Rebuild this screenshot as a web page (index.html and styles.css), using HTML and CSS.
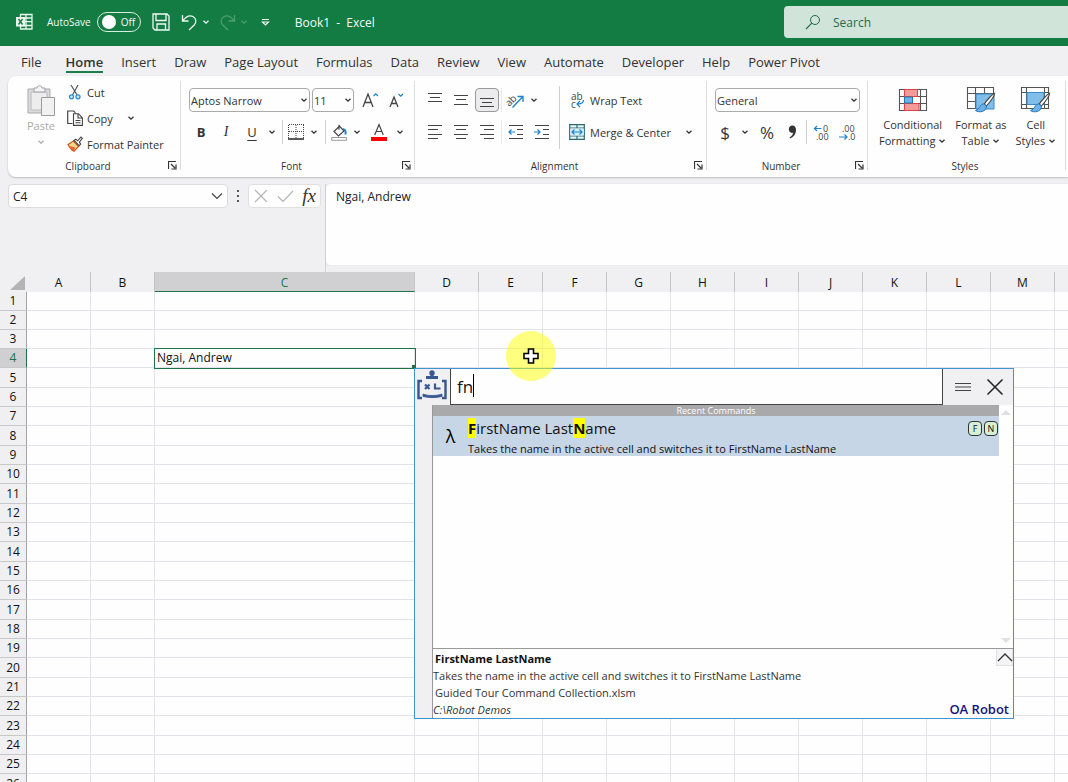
FILE: index.html
```html
<!DOCTYPE html>
<html lang="en">
<head>
<meta charset="utf-8">
<title>Book1 - Excel</title>
<link rel="stylesheet" href="styles.css">
</head>
<body>
<svg class="defs" aria-hidden="true">
  <symbol id="chev" viewBox="0 0 8 8"><path d="M1.500 2.700 4 5.200 6.500 2.700" fill="none" stroke="currentColor" stroke-width="1.300"/></symbol>
  <symbol id="launch" viewBox="0 0 9 9"><path d="M.5 8V.5H8M3 3l4 4M8 3.500V8H3.500" fill="none" stroke="#333" stroke-width="1.200"/></symbol>
  <symbol id="brush" viewBox="0 0 22 22"><path d="M20.600 1.200c-2 .8-8 7-10.400 11l2.200 1.800C15.500 10.500 20.500 4.500 20.600 1.200Z" fill="#fff" stroke="#444" stroke-width="1.100"/><path d="M9.800 12c-3.800-.4-3.600 5-8.300 6.600 3.500 2.200 10.800 1.600 11-4.600Z" fill="#6fb1e4" stroke="#2077b8"/></symbol>
</svg>

<header class="titlebar">
  <svg class="app-icon" width="17" height="18" viewBox="0 0 17 18"><path d="M4.500 1.500h11.500v14.500H4.500zM10 1.500V16M4.500 5H16M4.500 8.700H16M4.500 12.500H16" fill="none" stroke="#e8f5ec" stroke-width="1.300"/><path d="M0 4h9v9.500H0z" fill="#e8f5ec"/><path d="m2.500 6 4 5.500m0-5.500-4 5.500" stroke="#137c43" stroke-width="1.400"/></svg>
  <label class="autosave"><span>AutoSave</span><input type="checkbox" class="switch-input"><span class="switch"><i></i>Off</span></label>
  <button class="tb save" aria-label="Save"><svg width="18" height="18" viewBox="0 0 18 18"><path d="M1 1h14l2 2v14H3l-2-2ZM4 1v6.500h10V1M5 17v-6h8.500v6" fill="none" stroke="currentColor" stroke-width="1.300"/></svg></button>
  <button class="tb undo" aria-label="Undo"><svg width="17" height="17" viewBox="0 0 17 17"><path d="M1.500 1v6h6M1.800 6.700C5 2.500 8.500.8 12 2.500c3.500 2 3.500 6 1.200 8.500L8 16" fill="none" stroke="currentColor" stroke-width="1.300"/></svg><svg width="8" height="8"><use href="#chev"/></svg></button>
  <button class="tb redo" aria-label="Redo" disabled><svg width="17" height="17" viewBox="0 0 17 17"><path d="M15.500 1v6h-6M15.200 6.700C12 2.500 8.500.8 5 2.500 1.500 4.500 1.500 8.500 3.800 11L9 16" fill="none" stroke="currentColor" stroke-width="1.300"/></svg><svg width="8" height="8"><use href="#chev"/></svg></button>
  <button class="tb more" aria-label="Customize toolbar"><svg width="9" height="9" viewBox="0 0 9 9"><path d="M1 1.500h7M1.500 4 4.500 7l3-3Z" fill="none" stroke="currentColor" stroke-width="1.200"/></svg></button>
  <span class="doc-title">Book1&nbsp; -&nbsp; Excel</span>
  <label class="search"><svg width="16" height="16" viewBox="0 0 16 16"><circle cx="10" cy="6" r="4.500" fill="none" stroke="#1c6b4c"/><path d="M6.800 9.200 1 15" stroke="#1c6b4c" stroke-width="1.100"/></svg><input type="text" placeholder="Search" aria-label="Search"></label>
</header>

<nav class="tabs">
  <a href="#file" class="file">File</a><a href="#home" class="active">Home</a><a href="#insert">Insert</a><a href="#draw">Draw</a><a href="#layout">Page Layout</a><a href="#formulas">Formulas</a><a href="#data">Data</a><a href="#review">Review</a><a href="#view">View</a><a href="#automate">Automate</a><a href="#developer">Developer</a><a href="#help">Help</a><a href="#pivot">Power Pivot</a>
</nav>

<section class="ribbon">
  <div class="group clipboard">
    <div class="body">
      <button class="paste" disabled><svg width="28" height="31" viewBox="0 0 28 31"><path d="M1 4h22v24H1z" fill="#dcdcde" stroke="#a9a9ab"/><path d="M4 7h16v18H4z" fill="#ededee" stroke="#b8b8ba"/><path d="M7 7V3h3c0-3 5-3 5 0h3v4Z" fill="#f4f4f4" stroke="#a0a0a2"/><path d="M14.500 12.500h13v18h-13z" fill="#f1f1f2" stroke="#9c9c9e"/></svg><span>Paste</span><svg width="8" height="8"><use href="#chev"/></svg></button>
      <div class="stack">
        <button><svg width="16" height="16" viewBox="0 0 16 16"><path d="m4 1 6 10M11 1 5.500 11" stroke="#555" stroke-width="1.200"/><circle cx="4.500" cy="12.800" r="2" fill="#d8eefb" stroke="#2a8dd4" stroke-width="1.300"/><circle cx="11" cy="12.800" r="2" fill="#d8eefb" stroke="#2a8dd4" stroke-width="1.300"/></svg><span>Cut</span></button>
        <button><svg width="16" height="16" viewBox="0 0 16 16"><path d="M5.500 13.500H.7V1h6l1.800 1.800" fill="none" stroke="#444" stroke-width="1.200"/><path d="M6.500 3.700h5L15.400 8v7.400H6.500zM11 4v4h4M8.500 10.500h5M8.500 12.800h5" fill="#fff" stroke="#444" stroke-width="1.100"/></svg><span>Copy</span><svg class="far" width="8" height="8"><use href="#chev"/></svg></button>
        <button><svg width="16" height="16" viewBox="0 0 16 16"><path d="M1 8.500 6.500 5l5 5.500L7 15.300C4.500 14 2.500 11.500 1 8.500Z" fill="#fbd98c" stroke="#c8571c" stroke-width="1.200"/><path d="m2.500 10 6 1.500L7 15C5 13.500 3.500 12 2.500 10Z" fill="#e8673a"/><path d="m7 4.500 1.800-1.300 1.800 1.600L14 1l1.300 1.300-3 3.900 1.400 1.800-1.500 1.700Z" fill="#fff" stroke="#444" stroke-width="1.100"/></svg><span>Format Painter</span></button>
      </div>
    </div>
    <div class="foot"><span>Clipboard</span><button aria-label="Clipboard settings"><svg width="9" height="9"><use href="#launch"/></svg></button></div>
  </div>

  <div class="group font">
    <div class="body col">
      <div class="row">
        <label class="sel name"><select aria-label="Font"><option>Aptos Narrow</option></select><svg width="8" height="8"><use href="#chev"/></svg></label>
        <label class="sel size"><select aria-label="Font size"><option>11</option></select><svg width="8" height="8"><use href="#chev"/></svg></label>
        <button class="w26" aria-label="Increase font size"><svg width="17" height="17" viewBox="0 0 17 17"><path d="m1 15 5-13 5 13M3 10.500h6" fill="none" stroke="#444" stroke-width="1.300"/><path d="m11.500 4 2.200-2.200L16 4" fill="none" stroke="#1d83c8" stroke-width="1.200"/></svg></button>
        <button class="w26" aria-label="Decrease font size"><svg width="17" height="17" viewBox="0 0 17 17"><path d="m2 15 4-10 4 10M3.500 11.500h5" fill="none" stroke="#444" stroke-width="1.300"/><path d="m10.500 2 2.200 2.200L15 2" fill="none" stroke="#1d83c8" stroke-width="1.200"/></svg></button>
      </div>
      <div class="row">
        <button class="w24 bold">B</button><button class="w26 ital">I</button><button class="w26 under">U</button>
        <button class="w14" aria-label="Underline options"><svg width="8" height="8"><use href="#chev"/></svg></button><i class="sep"></i>
        <button class="w20" aria-label="Borders"><svg width="16" height="16" viewBox="0 0 16 16"><path d="M1 .5h15M.5 1v13M15.500 1v13M8 1v13M1 7.500h15" fill="none" stroke="#444" stroke-dasharray="1 1"/><path d="M0 15h16" stroke="#222" stroke-width="1.500"/></svg></button>
        <button class="w16" aria-label="Border options"><svg width="8" height="8"><use href="#chev"/></svg></button><i class="sep"></i>
        <button class="w20" aria-label="Fill colour"><svg width="17" height="17" viewBox="0 0 17 17"><path d="m3 7.500 5.500-5.500 4.500 5-5.500 5ZM8 .8v5" fill="none" stroke="#444" stroke-width="1.200"/><path d="M12 5c2.500.5 3.200 3 2.300 5.500" fill="none" stroke="#1d83c8" stroke-width="2"/><path d="M.7 13.500h15v2.800H.7z" fill="#fff" stroke="#999"/></svg></button>
        <button class="w16" aria-label="Fill options"><svg width="8" height="8"><use href="#chev"/></svg></button>
        <button class="w28" aria-label="Font colour"><svg width="16" height="17" viewBox="0 0 16 17"><path d="m3.700 11 4.300-10.500L12.300 11M5.200 7.500h5.600" fill="none" stroke="#444" stroke-width="1.200"/><path d="M0 13h16v4H0z" fill="#f00"/></svg></button>
        <button class="w14" aria-label="Font colour options"><svg width="8" height="8"><use href="#chev"/></svg></button>
      </div>
    </div>
    <div class="foot"><span>Font</span><button aria-label="Font settings"><svg width="9" height="9"><use href="#launch"/></svg></button></div>
  </div>

  <div class="group align">
    <div class="body">
      <div class="col">
        <div class="row">
          <button class="w26" aria-label="Top align"><svg class="ln" width="16" height="16" viewBox="0 0 16 16"><path d="M1 1.500h14M3 5.500h10M1 9.500h14"/></svg></button>
          <button class="w26" aria-label="Middle align"><svg class="ln" width="16" height="16" viewBox="0 0 16 16"><path d="M1 3.500h14M3 7.500h10M1 12.500h14"/></svg></button>
          <button class="w26 pressed" aria-label="Bottom align" aria-pressed="true"><svg class="ln" width="16" height="16" viewBox="0 0 16 16"><path d="M1 6.500h14M3 10.500h10M1 14.500h14"/></svg></button>
          <i class="sep light"></i>
          <button class="w24" aria-label="Orientation"><svg width="17" height="17" viewBox="0 0 17 17"><text x="-2" y="11" transform="rotate(-45 5 8)" font-size="10" fill="#444">ab</text><path d="M5.500 15.500 15.500 5M10.500 4.500H16V10" fill="none" stroke="#1d83c8" stroke-width="1.300"/></svg></button>
          <button class="w14" aria-label="Orientation options"><svg width="8" height="8"><use href="#chev"/></svg></button>
        </div>
        <div class="row">
          <button class="w26" aria-label="Align left"><svg class="ln" width="16" height="16" viewBox="0 0 16 16"><path d="M1 1.500h14M1 5.500h10M1 10.500h14M1 14.500h10"/></svg></button>
          <button class="w26" aria-label="Center"><svg class="ln" width="16" height="16" viewBox="0 0 16 16"><path d="M1 1.500h14M3 5.500h10M1 10.500h14M3 14.500h10"/></svg></button>
          <button class="w26" aria-label="Align right"><svg class="ln" width="16" height="16" viewBox="0 0 16 16"><path d="M1 1.500h14M5 5.500h10M1 10.500h14M5 14.500h10"/></svg></button>
          <i class="sep light"></i>
          <button class="w26" aria-label="Decrease indent"><svg class="ln" width="16" height="16" viewBox="0 0 16 16"><path d="M1 1.500h14M9 5.500h6M9 10.500h6M1 14.500h14"/><path class="blue" d="M7 8H1M3.500 5.500 1 8l2.500 2.500"/></svg></button>
          <button class="w26" aria-label="Increase indent"><svg class="ln" width="16" height="16" viewBox="0 0 16 16"><path d="M1 1.500h14M9 5.500h6M9 10.500h6M1 14.500h14"/><path class="blue" d="M0 8h6M3.500 5.500 6 8l-2.500 2.500"/></svg></button>
        </div>
      </div>
      <div class="col wraps">
        <div class="row"><button><svg width="16" height="17" viewBox="0 0 16 17"><text x="2" y="8" font-size="10" fill="#444">ab</text><text x="2" y="16" font-size="10" fill="#444">c</text><path d="M14.500 8c0 3-1.500 4-6 4M11 9l-3 3 3 3" fill="none" stroke="#1d83c8" stroke-width="1.200"/></svg><span>Wrap Text</span></button></div>
        <div class="row"><button><svg width="16" height="16" viewBox="0 0 16 16"><path d="M.7.7h14.600v14.600H.7zM.7 4h14.600M.7 12h14.600M8 .7V4M8 12v3.300" fill="#eef7f4" stroke="#2a6a72" stroke-width="1.200"/><path d="M1.300 4.500h13.400v7H1.300z" fill="#d5eefb"/><path d="M3 8h10M5.500 5.500 3 8l2.500 2.500M10.500 5.500 13 8l-2.500 2.500" fill="none" stroke="#1d83c8" stroke-width="1.200"/></svg><span>Merge &amp; Center</span><svg class="far" width="8" height="8"><use href="#chev"/></svg></button></div>
      </div>
    </div>
    <div class="foot"><span>Alignment</span><button aria-label="Alignment settings"><svg width="9" height="9"><use href="#launch"/></svg></button></div>
  </div>

  <div class="group number">
    <div class="body col">
      <div class="row"><label class="sel wide"><select aria-label="Number format"><option>General</option></select><svg width="8" height="8"><use href="#chev"/></svg></label></div>
      <div class="row">
        <button class="w20 big" aria-label="Currency">$</button><button class="w20" aria-label="Currency options"><svg width="8" height="8"><use href="#chev"/></svg></button><button class="w24 big" aria-label="Percent">%</button><button class="w26" aria-label="Comma style"><svg width="9" height="14" viewBox="0 0 9 14"><path d="M4.300.5C7 .5 8.300 2.500 8 5.500 7.700 9.500 5.500 12 2 13.500l-.4-1C4 11 5 9.500 5 7.800 2.500 8.500.8 6.500.8 4.300.8 2 2.300.5 4.300.5Z" fill="#333"/></svg></button><i class="sep tight"></i>
        <button class="w26" aria-label="Increase decimal"><svg width="17" height="17" viewBox="0 0 17 17"><text x="10" y="8" font-size="9" fill="#444">0</text><text x="3" y="16" font-size="9" fill="#444">.00</text><path d="M8.500 4.500H1.500M4 2 1.500 4.500 4 7" fill="none" stroke="#1d83c8" stroke-width="1.200"/></svg></button>
        <button class="w26" aria-label="Decrease decimal"><svg width="17" height="17" viewBox="0 0 17 17"><text x="3" y="8" font-size="9" fill="#444">.00</text><text x="9" y="16" font-size="9" fill="#444">.0</text><path d="M0 13h8M5.500 10.500 8 13l-2.500 2.500" fill="none" stroke="#1d83c8" stroke-width="1.200"/></svg></button>
      </div>
    </div>
    <div class="foot"><span>Number</span><button aria-label="Number settings"><svg width="9" height="9"><use href="#launch"/></svg></button></div>
  </div>

  <div class="group styles">
    <div class="body">
      <button class="tall"><svg width="30" height="26" viewBox="0 0 30 26"><path d="M1.500 2.500h27v21h-27zM1.500 9.500h27M1.500 16.500h27M6.500 2.500v21M22.500 2.500v21" fill="#fff" stroke="#555" stroke-width="1.100"/><path d="M6.500 2.500h13v7h-13zM6.500 16.500h14.500v7H6.500z" fill="#f59a9a" stroke="#e0433f"/><path d="M6.500 10h8v6h-8z" fill="#6fb1e4" stroke="#2077b8"/></svg><span>Conditional<br>Formatting <svg width="8" height="8"><use href="#chev"/></svg></span></button>
      <button class="tall"><svg width="30" height="28" viewBox="0 0 30 28"><path d="M1.500 1.500h26v21h-26zM1.500 7.500h26M1.500 15.500h26M9.500 1.500v21M18.500 1.500v21" fill="#fff" stroke="#555" stroke-width="1.100"/><path d="M10 8h18v15H10z" fill="#80bde9" stroke="#3b8ac6"/><use href="#brush" x="8" y="6" width="22" height="22"/></svg><span>Format as<br>Table <svg width="8" height="8"><use href="#chev"/></svg></span></button>
      <button class="tall"><svg width="30" height="28" viewBox="0 0 30 28"><path d="M.5 1.500h27v21H.5zM.5 6.500h27M.5 18.500h27M5.500 1.500v21M23.500 1.500v21" fill="#fff" stroke="#555" stroke-width="1.100"/><path d="M6 6.500h17v12H6z" fill="#80bde9" stroke="#3b8ac6"/><use href="#brush" x="8" y="6" width="22" height="22"/></svg><span>Cell<br>Styles <svg width="8" height="8"><use href="#chev"/></svg></span></button>
    </div>
    <div class="foot"><span>Styles</span></div>
  </div>
</section>

<section class="formula-bar">
  <label class="namebox"><input type="text" value="C4" aria-label="Name box"><svg width="12" height="8" viewBox="0 0 12 8"><path d="m1 1.500 5 5 5-5" fill="none" stroke="#444" stroke-width="1.200"/></svg></label>
  <svg class="dots" width="4" height="14" viewBox="0 0 4 14"><path d="M1 1h2v2H1zM1 6h2v2H1zM1 11h2v2H1z" fill="#555"/></svg>
  <div class="fx">
    <button aria-label="Cancel"><svg width="14" height="14" viewBox="0 0 14 14"><path d="m1 1 12 12M13 1 1 13" stroke="#b5b5b7" stroke-width="1.200"/></svg></button>
    <button aria-label="Enter"><svg width="17" height="14" viewBox="0 0 17 14"><path d="m1 7.500 5 5L16 2" fill="none" stroke="#b5b5b7" stroke-width="1.200"/></svg></button>
    <button class="fn" aria-label="Insert function">fx</button>
  </div>
  <div class="formula"><textarea aria-label="Formula">Ngai, Andrew</textarea></div>
</section>

<main class="sheet">
  <table>
    <colgroup><col class="c-head"><col class="c-std"><col class="c-std"><col class="c-wide"></colgroup>
    <thead><tr id="letters"><th class="corner"><svg width="15" height="14" viewBox="0 0 15 14"><path d="M15 0v14H0Z" fill="#b4b4b5"/></svg></th></tr></thead>
    <tbody id="rows"></tbody>
  </table>

  <section class="robot">
    <div class="robot-top">
      <svg class="logo" width="34" height="35" viewBox="0 0 34 35"><g fill="none" stroke="#38568f" stroke-width="2.400"><path d="M7 12H3.500v17H7M27 12h3.500v17H27"/><path d="M11 8.500h12" stroke-width="3"/><path d="M17 8V4" stroke-width="3"/><path d="M8 25c5 2 13 2 19 0v2.500c-6 1.500-13 1.500-19 0Z" stroke-width=".8" fill="#38568f"/><path d="m10 15.500 4.500 4.500m0-4.500L10 20M20 14.500v5h5.500" stroke-width="2.200"/></g><circle cx="17" cy="4" r="2.700" fill="#38568f"/></svg>
      <label class="query"><input type="text" value="fn" aria-label="Command search"><i class="caret"></i></label>
      <button class="menu" aria-label="Menu"><svg width="18" height="10" viewBox="0 0 18 10"><path d="M1 1.500h16M1 5h16M1 8.500h16" stroke="#444"/></svg></button>
      <button class="close" aria-label="Close"><svg width="18" height="18" viewBox="0 0 18 18"><path d="m1.500 1.500 15 15m0-15-15 15" stroke="#222" stroke-width="1.500"/></svg></button>
    </div>
    <div class="robot-main">
      <div class="list">
        <div class="results">
          <div class="recent">Recent Commands</div>
          <div class="item">
            <span class="lambda">λ</span>
            <div class="item-text"><div class="item-name"><mark>F</mark>irstName Last<mark>N</mark>ame</div><div>Takes the name in the active cell and switches it to FirstName LastName</div></div>
            <kbd>F</kbd><kbd>N</kbd>
          </div>
        </div>
        <div class="scroll"><svg width="10" height="5" viewBox="0 0 10 5"><path d="m0 5 5-5 5 5Z" fill="#e0e0e3"/></svg><svg width="10" height="5" viewBox="0 0 10 5"><path d="m0 0 5 5 5-5Z" fill="#e0e0e3"/></svg></div>
      </div>
      <div class="detail">
        <div class="lines"><div class="ind"><b>FirstName LastName</b></div><div>Takes the name in the active cell and switches it to FirstName LastName</div><div class="ind">Guided Tour Command Collection.xlsm</div><div><em>C:\Robot Demos</em></div></div>
        <div class="side"><button aria-label="Collapse details"><svg width="16" height="9" viewBox="0 0 16 9"><path d="m1 8 7-7 7 7" fill="none" stroke="#333" stroke-width="1.400"/></svg></button><strong>OA Robot</strong></div>
      </div>
    </div>
  </section>
  <div class="cursor-halo"><svg width="16" height="16" viewBox="0 0 16 16"><path d="M5.500 1h5v4.500H15v5h-4.500V15h-5v-4.500H1v-5h4.500Z" fill="#fff" stroke="#000" stroke-width="1.600"/></svg></div>
</main>
<script src="sheet.js"></script>
</body>
</html>
```
FILE: sheet.js
```js
const letters = "ABCDEFGHIJKLM".split("").concat("");
const head = document.getElementById("letters");
letters.forEach(function (l) {
  const th = document.createElement("th");
  th.scope = "col";
  th.textContent = l;
  if (l === "C") th.className = "on";
  head.appendChild(th);
});
const body = document.getElementById("rows");
for (let r = 1; r <= 26; r++) {
  const tr = document.createElement("tr");
  const th = document.createElement("th");
  th.scope = "row";
  th.textContent = r;
  if (r === 4) th.className = "on";
  tr.appendChild(th);
  letters.forEach(function (l) {
    const td = document.createElement("td");
    if (r === 4 && l === "C") {
      td.className = "active";
      td.textContent = "Ngai, Andrew";
    }
    tr.appendChild(td);
  });
  body.appendChild(tr);
}
```
FILE: styles.css
```css
* { box-sizing: border-box; }
body { margin: 0; height: 100vh; overflow: hidden; display: flex; flex-direction: column; background: #f0f0f2; color: #333; font: 12px "Open Sans", "Noto Sans", sans-serif; }
button { border: 0; padding: 0; background: none; color: inherit; font: inherit; display: flex; align-items: center; justify-content: center; }
input, select, textarea { border: 0; padding: 0; background: none; color: inherit; font: inherit; outline: 0; appearance: none; min-width: 0; }
svg { flex: none; overflow: visible; }
svg text { font-family: "Open Sans", sans-serif; }
.defs { position: absolute; width: 0; height: 0; }

.titlebar { flex: none; height: 46px; display: flex; align-items: center; padding: 0 0 2px 16px; background: #137c43; color: #f2faf5; }
.autosave { display: flex; align-items: center; gap: 6px; margin-left: 14px; font-size: 10px; }
.switch-input { position: absolute; opacity: 0; }
.switch { display: flex; align-items: center; gap: 5px; width: 44px; height: 20px; padding-left: 4px; border: 1px solid #d8eee0; border-radius: 10px; }
.switch i { width: 14px; height: 14px; border-radius: 50%; background: #fff; }
.tb { gap: 4px; }
.save { margin-left: 11px; }
.undo { margin-left: 11px; }
.redo { margin-left: 9px; color: #4f9d70; }
.more { margin-left: 13px; }
.doc-title { margin-left: 25px; }
.search { margin-left: auto; width: 284px; height: 32px; display: flex; align-items: center; gap: 12px; padding-left: 21px; border-radius: 4px 0 0 4px; background: #d0e4da; }
.search input { flex: 1; font-size: 12px; color: #1c6b4c; }
.search input::placeholder { color: #1c6b4c; opacity: 1; }

.tabs { flex: none; height: 30px; display: flex; gap: 18px; padding: 5px 0 0 21px; font-size: 13px; line-height: 22px; white-space: nowrap; }
.tabs a { color: #333; text-decoration: none; height: 22px; }
.tabs .file { margin-right: 6px; }
.tabs .active { font-weight: 600; border-bottom: 2px solid #1a7f4b; }

.ribbon { flex: none; height: 101px; margin-left: 8px; display: flex; overflow: hidden; background: #fefefe; border-radius: 8px 0 0 8px; box-shadow: 0 1px 2px #bbb; font-size: 11px; }
.group { flex: none; display: flex; flex-direction: column; position: relative; white-space: nowrap; }
.group::after { content: ""; position: absolute; right: 0; top: 5px; bottom: 7px; width: 1px; background: #dcdcde; }
.body { flex: 1; display: flex; }
.foot { height: 20px; display: flex; align-items: center; font-size: 10px; padding: 0 4px 3px 0; }
.foot span { flex: 1; text-align: center; }
.col { display: flex; flex-direction: column; gap: 8px; padding-top: 12px; }
.row { display: flex; align-items: center; height: 24px; }
.clipboard { width: 173px; }
.font { width: 234px; }
.font .col, .number .col { padding-left: 8px; }
.align { width: 292px; }
.align .body { padding-left: 7px; }
.number { width: 161px; }
.styles { width: 198px; }
.paste { flex-direction: column; justify-content: flex-start; width: 49px; padding: 9px 0 0 17px; margin-right: 10px; color: #aaa; }
.paste span { line-height: 20px; }
.paste svg:last-child { margin-top: 2px; }
.stack { display: flex; flex-direction: column; padding-top: 3px; }
.stack button { height: 26px; gap: 4px; justify-content: flex-start; }
.stack .far { margin-left: 10px; }
.sel { position: relative; display: flex; height: 24px; }
.sel select { width: 100%; padding-left: 1px; border: 1px solid #aaa; border-radius: 4px; }
.sel svg { position: absolute; right: 2px; top: 8px; }
.name { width: 121px; margin-right: 2px; }
.size { width: 42px; margin-right: 3px; }
.wide { width: 145px; }
.w14 { width: 14px; }
.w16 { width: 16px; }
.w20 { width: 20px; }
.w24 { width: 24px; }
.w26 { width: 26px; height: 24px; }
.w28 { width: 28px; }
.bold { font-size: 13px; font-weight: 700; }
.ital { font: italic 14px "Liberation Serif", serif; }
.under { font-size: 13px; text-decoration: underline; text-underline-offset: 3px; }
.big { font-size: 17px; }
.sep { flex: none; width: 1px; height: 24px; margin: 0 3px; background: #d0d0d2; }
.sep.tight { margin: 0 1px; }
.sep.light { margin: 0 1px; background: #e8e8ec; }
.pressed { border: 1px solid #999; border-radius: 4px; background: #ececee; width: 24px; margin: 0 1px; }
.ln { fill: none; stroke: #444; stroke-width: 1.2; }
.ln .blue { stroke: #1d83c8; }
.wraps { margin-left: auto; width: 148px; position: relative; padding-left: 10px; }
.wraps::before { content: ""; position: absolute; left: 0; top: 10px; height: 63px; width: 1px; background: #d0d0d2; }
.wraps button { gap: 5px; }
.wraps .far { margin-left: 9px; }
.styles .body { padding: 9px 0 0 11px; gap: 9px; }
.tall { flex-direction: column; justify-content: flex-start; }
.tall > svg { height: 30px; }
.tall span { line-height: 16px; padding-top: 2px; }

.formula-bar { flex: none; display: flex; align-items: flex-start; height: 95px; padding: 7px 0 0 8px; color: #222; }
.namebox { width: 220px; height: 24px; display: flex; align-items: center; padding: 0 4px; border: 1px solid #dcdcde; border-radius: 4px; background: #fefefe; }
.namebox input { flex: 1; }
.dots { margin: 5px 8px; }
.fx { width: 73px; height: 24px; display: flex; justify-content: space-between; padding: 0 4px 0 5px; border: 1px solid #e0e0e2; border-radius: 4px; background: #fefefe; }
.fn { font: italic 19px "Liberation Serif", serif; color: #333; }
.formula { flex: 1; align-self: stretch; margin-left: 4px; padding-bottom: 7px; border-left: 1px solid #d2d2d4; display: flex; }
.formula textarea { flex: 1; resize: none; padding: 4px 10px; border-radius: 4px 0 0 4px; background: #fefefe; box-shadow: 0 0 1px #bbb; }

.sheet { flex: 1; min-height: 0; position: relative; overflow: hidden; color: #111; }
table { table-layout: fixed; border-collapse: separate; border-spacing: 0; width: 1119px; }
col { width: 64px; }
.c-head { width: 27px; }
.c-wide { width: 260px; }
thead tr { height: 20px; }
tbody tr { height: 19px; }
tbody tr:nth-child(3n + 5) { height: 20px; }
th, td { padding: 0; font-size: 12px; font-weight: 400; line-height: 18px; border: 0 solid #e3e3ea; }
thead th { border-right: 1px solid #c4c4c6; background: #f0f0f2; padding-top: 2px; }
thead th.on { background: #d0d0d2; border-bottom: 1px solid #1e7347; color: #1e7347; line-height: 17px; }
thead .corner { text-align: right; border: 0; padding-right: 2px; line-height: 0; }
tbody th { background: #f0f0f2; border-right: 1px solid #a4a4a6; border-bottom: 1px solid #c8c8ca; }
tbody th.on { background: #d0d0d2; color: #1e7347; border-right-color: #1e7347; }
td { background: #fefefe; border-width: 0 1px 1px 0; }
td.active { padding-left: 2px; outline: 1px solid #1e7347; position: relative; }
td.active::after { content: ""; position: absolute; right: -2px; bottom: -2px; width: 4px; height: 4px; background: #1e7347; }
.cursor-halo { position: absolute; left: 506px; top: 59px; width: 50px; height: 50px; border-radius: 50%; background: rgba(255, 255, 0, 0.5); display: flex; align-items: center; justify-content: center; }

.robot { position: absolute; left: 414px; top: 96px; width: 600px; height: 351px; border: 1px solid #3d94d1; background: #fefefe; display: flex; flex-direction: column; }
.robot-top { height: 36px; display: flex; padding-right: 6px; background: #f0f0f2; }
.logo { margin-right: 1px; }
.query { flex: 1; position: relative; display: flex; border: 1px solid #444; border-top: 0; background: #fefefe; }
.query input { flex: 1; padding-left: 6px; font-size: 17px; }
.caret { position: absolute; left: 22px; top: 5px; width: 1px; height: 23px; background: #000; }
.menu { width: 40px; }
.close { width: 24px; }
.robot-main { flex: 1; display: flex; flex-direction: column; margin-left: 17px; border-left: 1px solid #999; box-shadow: -17px 0 #f0f0f2; }
.list { flex: 1; display: flex; border-bottom: 1px solid #999; }
.results { flex: 1; }
.recent { height: 11px; line-height: 11px; font-size: 9px; text-align: center; color: #fff; background: #a9a9ab; }
.item { display: flex; align-items: flex-start; height: 40px; background: #c7d6e7; padding-right: 1px; }
.lambda { width: 35px; text-align: center; font-size: 18px; line-height: 40px; color: #000; }
.item-text { flex: 1; font-size: 11px; line-height: 18px; }
.item-name { font-size: 15px; line-height: 24px; }
mark { font-weight: 700; background: #ff0; color: inherit; }
kbd { width: 14px; height: 15px; margin: 5px 0 0 2px; border: 1px solid #333; border-radius: 4px; background: #d5f0d5; font: 9px/13px "Open Sans", sans-serif; text-align: center; }
.scroll { width: 14px; display: flex; flex-direction: column; justify-content: space-between; align-items: center; padding: 5px 0; }
.detail { height: 69px; display: flex; }
.lines { flex: 1; padding-top: 1px; font-size: 11px; line-height: 17px; color: #333; }
.lines b { color: #111; }
.ind { padding-left: 2px; }
.side { display: flex; flex-direction: column; justify-content: space-between; align-items: flex-end; }
.side button { width: 17px; height: 17px; background: #f4f4f6; border: 1px solid #e2e2e4; border-top: 0; }
.side strong { padding-right: 4px; font-size: 13px; font-weight: 600; color: #14147c; }
```
